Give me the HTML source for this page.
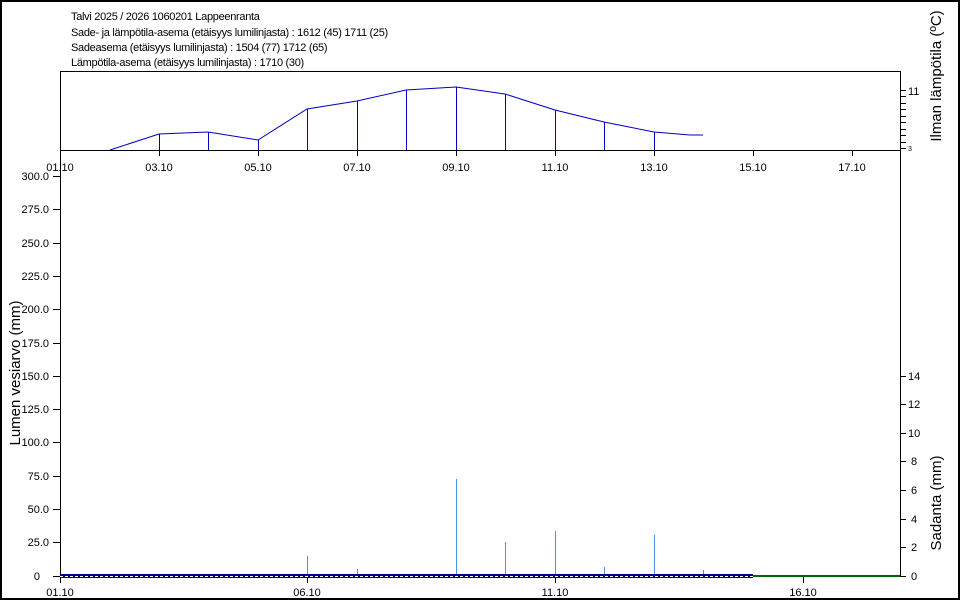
<!DOCTYPE html>
<html><head><meta charset="utf-8"><style>
html,body{margin:0;padding:0;background:#fff;}
svg{display:block;font-family:"Liberation Sans",sans-serif;}
</style></head><body>
<svg width="961" height="601" viewBox="0 0 961 601" xmlns="http://www.w3.org/2000/svg">
<rect x="0" y="0" width="961" height="601" fill="#fff"/>
<rect x="1" y="1" width="958" height="598" fill="none" stroke="#000" stroke-width="2"/>
<g font-size="11" fill="#000" letter-spacing="-0.3">
<text x="71" y="20">Talvi 2025 / 2026 1060201 Lappeenranta</text>
<text x="71" y="36">Sade- ja lämpötila-asema (etäisyys lumilinjasta) :  1612 (45) 1711 (25)</text>
<text x="71" y="51">Sadeasema (etäisyys lumilinjasta) :  1504 (77) 1712 (65)</text>
<text x="71" y="66">Lämpötila-asema (etäisyys lumilinjasta) :  1710 (30)</text>
</g>
<g shape-rendering="crispEdges">
<path d="M60.5 576 V71.5 H900.5 V576" fill="none" stroke="#000"/>
<path d="M60 150.5 H900" stroke="#000"/>
<g stroke="#000">
<path d="M60.5 150v6M159.5 150v6M258.5 150v6M357.5 150v6M456.5 150v6M555.5 150v6M654.5 150v6M753.5 150v6M852.5 150v6"/>
<path d="M900 90.5h6M900 96.5h6M900 103.5h6M900 109.5h6M900 116.5h6M900 122.5h6M900 129.5h6M900 135.5h6M900 142.5h6M900 148.5h6"/>
</g>
<g stroke="#0000c0">
<path d="M159.5 134V150M208.5 132V150M258.5 140V150M307.5 109V150M357.5 101V150M406.5 90V150M456.5 87V150M505.5 94V150M555.5 110V150M604.5 122V150M654.5 132V150"/>
</g>
<g stroke="#000">
<path d="M53 176.5h7M53 209.5h7M53 243.5h7M53 276.5h7M53 309.5h7M53 343.5h7M53 376.5h7M53 409.5h7M53 442.5h7M53 476.5h7M53 509.5h7M53 542.5h7M53 576.5h7"/>
<path d="M900 376.5h6M900 404.5h6M900 433.5h6M900 461.5h6M900 490.5h6M900 519.5h6M900 547.5h6M900 576.5h6"/>
<path d="M60.5 576v7M307.5 576v7M555.5 576v7M803.5 576v7"/>
</g>
<g stroke="#4a90e2">
<path d="M307.5 556V576M357.5 569V576M456.5 479V576M505.5 542V576M555.5 531V576M604.5 567V576M654.5 535V576M703.5 570V576"/>
</g>
<rect x="60" y="574" width="693" height="4" fill="#000080"/>
<path d="M60 576.5H753" stroke="#fff" stroke-dasharray="3,2"/>
<rect x="753" y="575" width="147" height="2" fill="#006400"/>
</g>
<g font-size="11" text-anchor="middle">
<text x="60" y="171">01.10</text><text x="159" y="171">03.10</text><text x="258" y="171">05.10</text><text x="357" y="171">07.10</text><text x="456" y="171">09.10</text><text x="555" y="171">11.10</text><text x="654" y="171">13.10</text><text x="753" y="171">15.10</text><text x="852" y="171">17.10</text>
</g>
<text x="908" y="95" font-size="11">11</text>
<text x="908" y="151" font-size="7">3</text>
<polyline points="110,150 159,134 208,132 258,140 307,109 357,101 406,90 456,87 505,94 555,110 604,122 654,132 690,135 703,135" fill="none" stroke="#0000c0"/>
<g font-size="11" text-anchor="end">
<text x="49" y="180">300.0</text><text x="49" y="213">275.0</text><text x="49" y="247">250.0</text><text x="49" y="280">225.0</text><text x="49" y="313">200.0</text><text x="49" y="347">175.0</text><text x="49" y="380">150.0</text><text x="49" y="413">125.0</text><text x="49" y="446">100.0</text><text x="49" y="480">75.0</text><text x="49" y="513">50.0</text><text x="49" y="546">25.0</text><text x="40" y="580">0</text>
</g>
<g font-size="11">
<text x="908" y="380">14</text><text x="908" y="408">12</text><text x="908" y="437">10</text><text x="911" y="465">8</text><text x="911" y="494">6</text><text x="911" y="523">4</text><text x="911" y="551">2</text><text x="911" y="580">0</text>
</g>
<g font-size="11" text-anchor="middle">
<text x="60" y="596">01.10</text><text x="307" y="596">06.10</text><text x="555" y="596">11.10</text><text x="803" y="596">16.10</text>
</g>
<g font-size="15" text-anchor="middle">
<text transform="translate(20,373) rotate(-90)">Lumen vesiarvo (mm)</text>
<text transform="translate(941,76) rotate(-90)">Ilman lämpötila (ºC)</text>
<text transform="translate(941,503) rotate(-90)">Sadanta (mm)</text>
</g>
</svg>
</body></html>
